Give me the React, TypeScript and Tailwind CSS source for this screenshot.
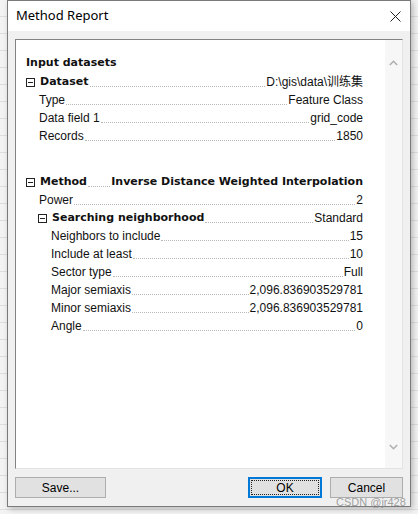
import React from "react";

type Row = {
  label: string;
  value?: string;
  bold?: boolean;
  boldValue?: boolean;
  toggle?: boolean;
  indent: number;
  gap?: boolean;
};

const rows: Row[] = [
  { label: "Dataset", value: "D:\\gis\\data\\训练集", bold: true, toggle: true, indent: 0 },
  { label: "Type", value: "Feature Class", indent: 1 },
  { label: "Data field 1", value: "grid_code", indent: 1 },
  { label: "Records", value: "1850", indent: 1 },
  { label: "Method", value: "Inverse Distance Weighted Interpolation", bold: true, boldValue: true, toggle: true, indent: 0, gap: true },
  { label: "Power", value: "2", indent: 1 },
  { label: "Searching neighborhood", value: "Standard", bold: true, toggle: true, indent: 1 },
  { label: "Neighbors to include", value: "15", indent: 2 },
  { label: "Include at least", value: "10", indent: 2 },
  { label: "Sector type", value: "Full", indent: 2 },
  { label: "Major semiaxis", value: "2,096.836903529781", indent: 2 },
  { label: "Minor semiaxis", value: "2,096.836903529781", indent: 2 },
  { label: "Angle", value: "0", indent: 2 },
];

function Toggle() {
  return (
    <span className="mr-[5px] inline-flex h-[9px] w-[9px] shrink-0 items-center justify-center border border-[#222]">
      <span className="h-px w-[5px] bg-[#222]" />
    </span>
  );
}

function ReportRow({ row }: { row: Row }) {
  const pad = row.indent === 0 ? "pl-0" : row.indent === 1 ? "pl-[12px]" : "pl-[24px]";
  const labelPad = row.toggle ? "" : row.indent === 0 ? "" : "pl-px";
  return (
    <div className={`flex h-[18px] items-center ${pad} ${row.gap ? "mt-[28px]" : ""}`}>
      {row.toggle && <Toggle />}
      <span
        className={`whitespace-nowrap ${labelPad} ${
          row.bold
            ? "font-['DejaVu_Sans',sans-serif] text-[11px] font-bold"
            : "text-[12px]"
        }`}
      >
        {row.label}
      </span>
      <span className="mx-px mt-[9px] h-px flex-1 border-b border-dotted border-[#b8b8b8]" />
      <span
        className={`whitespace-nowrap ${
          row.boldValue
            ? "font-['DejaVu_Sans',sans-serif] text-[11px] font-bold"
            : "font-['Liberation_Sans','Noto_Sans_CJK_SC',sans-serif] text-[12px]"
        }`}
      >
        {row.value}
      </span>
    </div>
  );
}

export default function App() {
  return (
    <div className="relative h-[514px] w-[418px] overflow-hidden bg-[#f3f3f3] bg-[repeating-linear-gradient(to_bottom,transparent_0px,transparent_16px,#dedede_16px,#dedede_17px)] font-['Liberation_Sans',sans-serif] text-[#111]">
      {/* dialog */}
      <div className="ml-[7px] flex h-[507px] w-[404px] flex-col border border-[#7a7a7a] bg-[#f0f0f0] shadow-[2px_2px_6px_rgba(0,0,0,0.25)]">
        {/* title bar */}
        <div className="flex h-[30px] items-center justify-between bg-white pl-[8px] pr-[9px]">
          <span className="font-['Noto_Sans',sans-serif] text-[13px] text-black">Method Report</span>
          <svg width="11" height="11" viewBox="0 0 11 11" className="text-[#222]">
            <path d="M0.5 0.5 L10.5 10.5 M10.5 0.5 L0.5 10.5" stroke="currentColor" strokeWidth="1" />
          </svg>
        </div>

        <div className="flex flex-1 flex-col px-[7px] pt-[8px] pb-[8px]">
          {/* report panel */}
          <div className="flex h-[430px] border border-t-[#828282] border-l-[#828282] border-r-[#e3e3e3] border-b-[#e3e3e3] bg-white">
            <div className="flex-1 pl-[10px] pr-[22px] pt-[14px]">
              <div className="flex h-[19px] items-center font-['DejaVu_Sans',sans-serif] text-[11px] font-bold">
                Input datasets
              </div>
              {rows.map((r) => (
                <ReportRow key={r.label} row={r} />
              ))}
            </div>
            {/* scrollbar */}
            <div className="flex w-[17px] flex-col items-center justify-between bg-[#f7f7f7] pt-[20px] pb-[18px]">
              <svg width="9" height="6" viewBox="0 0 9 6">
                <path d="M0.8 5 L4.5 1.3 L8.2 5" fill="none" stroke="#b0b0b0" strokeWidth="1.6" />
              </svg>
              <svg width="9" height="6" viewBox="0 0 9 6">
                <path d="M0.8 1 L4.5 4.7 L8.2 1" fill="none" stroke="#b0b0b0" strokeWidth="1.6" />
              </svg>
            </div>
          </div>

          {/* buttons */}
          <div className="mt-[8px] flex h-[21px] items-stretch">
            <button className="w-[91px] border border-[#adadad] bg-[#e1e1e1] text-[12px] text-black">
              Save...
            </button>
            <div className="flex-1" />
            <button className="flex w-[74px] items-center justify-center border-2 border-[#0078d7] bg-[#e1e1e1] p-px text-[12px] text-black">
              <span className="flex h-full w-full items-center justify-center border border-dotted border-[#222]">
                OK
              </span>
            </button>
            <button className="ml-[8px] w-[73px] border border-[#adadad] bg-[#e1e1e1] text-[12px] text-black">
              Cancel
            </button>
          </div>
        </div>
      </div>

      {/* watermark */}
      <div className="absolute left-[336px] top-[494px] font-['Liberation_Sans',sans-serif] text-[11px] text-[#8a8a8a]/80">
        CSDN @jr428
      </div>
    </div>
  );
}
